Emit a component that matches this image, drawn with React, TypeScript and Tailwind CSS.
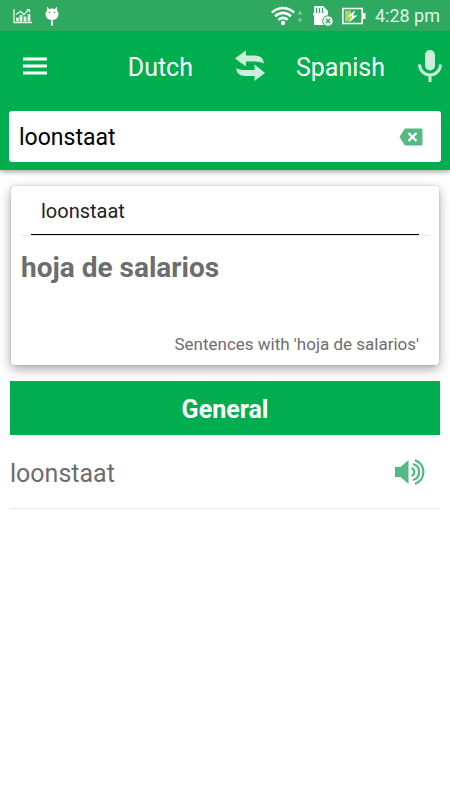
import { useState } from "react";

const StatusBar = () => {
    return (
        <div className="flex h-[31px] items-center justify-between bg-[#2fa860] pl-3 pr-[10px] text-[#d9f0e2]">
            <div className="flex items-center gap-3">
                <svg className="h-5 w-5" viewBox="0 0 20 20" fill="none" stroke="currentColor">
                    <path d="M2 3v13.500H20" strokeWidth="1.400" />
                    <path d="M5.500 15.500v-4M9 15.500V9M13 15.500v-5M17 15.500V8" strokeWidth="2.800" />
                    <path d="M4 8.500L8.500 5.500L12 8.500L17 3.500" strokeWidth="1.500" />
                    <path d="M14.500 3.500h3v3" strokeWidth="1.200" />
                </svg>
                <svg className="h-5 w-4" viewBox="0 0 16 20">
                    <path d="M3 .5L5 3Q8 1.800 11 3L13 .5L13 4.500Q14.500 6.500 14.500 8.500A6.500 5.500 0 0 1 1.500 8.500Q1.500 6.500 3 4.500Z" fill="#fff" />
                    <circle cx="5.500" cy="6.500" r=".8" fill="#2fa860" />
                    <circle cx="10.500" cy="6.500" r=".8" fill="#2fa860" />
                    <path d="M8 14.500v5" stroke="#fff" strokeWidth="2" />
                </svg>
            </div>
            <div className="flex items-center">
                <svg className="h-5 w-8" viewBox="0 0 32 20" fill="none">
                    <path d="M.8 6.500Q12 -2.500 23.200 6.500M4 10.300Q12 3.500 20 10.300M7.300 13.800Q12 10 16.700 13.800" stroke="#fff" strokeWidth="2.600" />
                    <circle cx="12" cy="17" r="2.200" fill="#fff" />
                    <path d="M26.500 8.500L29 4.500L31.500 8.500ZM26.500 12.500L29 16.500L31.500 12.500Z" fill="#83c99c" />
                </svg>
                <svg className="ml-2 h-5 w-6" viewBox="0 0 24 20">
                    <path d="M3 0H12L17 5V19H4Q3 19 3 18V10L2 8L3 6Z" fill="#fff" />
                    <path d="M5.500 2v5M8.500 2v5M11.500 2v5" stroke="#2fa860" strokeWidth="1.300" />
                    <circle cx="17" cy="15" r="5.300" fill="#e5f5eb" stroke="#2fa860" strokeWidth="1" />
                    <path d="M15 13l4 4M19 13l-4 4" stroke="#2fa860" strokeWidth="1.300" />
                </svg>
                <svg className="ml-[7px] h-5 w-6" viewBox="0 0 24 20">
                    <path d="M.8 2.500H20.200V17.500H.8Z" fill="none" stroke="#fff" strokeWidth="1.600" />
                    <path d="M21 7h2.500v6H21Z" fill="#fff" />
                    <path d="M3 4.500H9V15.500H3Z" fill="#a5d468" />
                    <path d="M9 4.500H18V15.500H9Z" fill="#2fa860" />
                    <path d="M13.500 4L5.500 10.500H10L7.500 16L15.500 9.500H11Z" fill="#fff" />
                </svg>
                <span className="ml-[9px] text-lg text-[#e3f4e9]">4:28 pm</span>
            </div>
        </div>
    );
};

const Toolbar = () => {
    return (
        <nav className="flex h-[70px] items-center pl-[23px] pr-2 text-[25px] text-white">
            <button type="button" aria-label="Menu" className="mr-auto">
                <svg className="h-[18px] w-6" viewBox="0 0 24 18">
                    <path d="M0 2h24M0 9h24M0 16h24" stroke="#fff" strokeWidth="3" />
                </svg>
            </button>
            <button type="button" className="pt-1">Dutch</button>
            <button type="button" aria-label="Swap languages" className="ml-[42px]">
                <svg className="h-8 w-[30px]" viewBox="0 0 30 32" fill="#ccefdc">
                    <path d="M0 8.500L11 .3V5.500H20Q28 5.500 29 13.500Q26 11.500 20 11.500H11V16.500Z" />
                    <path d="M30 23L19.500 31V26H10Q2 26 1 18Q4 20 10 20H19.500V14.500Z" />
                </svg>
            </button>
            <button type="button" className="ml-[31px] pt-1">Spanish</button>
            <button type="button" aria-label="Voice input" className="ml-[33px]">
                <svg className="h-8 w-6" viewBox="0 0 24 32" fill="none">
                    <rect x="7" y="0" width="10" height="20.500" rx="5" fill="#ccefdc" />
                    <path d="M1.500 14.500A10.500 10.500 0 0 0 22.500 14.500M12 25v7" stroke="#ccefdc" strokeWidth="3" />
                </svg>
            </button>
        </nav>
    );
};

const App = () => {
    const [query, setQuery] = useState("loonstaat");

    return (
        <div className="min-h-screen bg-white font-[Roboto,sans-serif]">
            <header className="bg-[#00ae50] shadow-[0_2px_5px_rgba(0,0,0,0.35)]">
                <StatusBar />
                <Toolbar />
                <form className="px-[9px] pb-2 pt-[10px]" onSubmit={(e) => e.preventDefault()}>
                    <div className="flex h-[51px] items-center rounded-[3px] bg-white pl-[10px] pr-[18px]">
                        <input
                            type="text"
                            aria-label="Search"
                            value={query}
                            onChange={(e) => setQuery(e.target.value)}
                            className="min-w-0 flex-1 pt-1 text-[23px] text-black outline-none"
                        />
                        <button type="button" aria-label="Clear" onClick={() => setQuery("")}>
                            <svg className="h-[18px] w-6" viewBox="0 0 24 18">
                                <path d="M7 .5H22Q23.500 .5 23.500 2V16Q23.500 17.500 22 17.500H7Q6 17.500 5.200 16.500L.5 9L5.200 1.500Q6 .5 7 .5Z" fill="#54b983" />
                                <path d="M9.500 5L17.500 13M17.500 5L9.500 13" stroke="#fff" strokeWidth="2.400" />
                            </svg>
                        </button>
                    </div>
                </form>
            </header>

            <main className="px-[10px] pt-4">
                <section className="mx-px flex h-[179px] flex-col rounded bg-white px-[10px] shadow-[0_4px_12px_rgba(0,0,0,0.35),0_0_3px_rgba(0,0,0,0.15)]">
                    <div className="border-b border-gray-200 px-[10px]">
                        <p className="h-[49px] border-b border-black px-[10px] pt-[10px] text-xl leading-[30px] text-[#222]">loonstaat</p>
                    </div>
                    <h1 className="mt-4 text-[28px] font-bold leading-8 text-[#6d6d6d]">hoja de salarios</h1>
                    <a href="#sentences" className="mb-[9px] mr-[10px] mt-auto self-end text-[17px] leading-6 text-[#6d6d6d]">
                        Sentences with 'hoja de salarios'
                    </a>
                </section>

                <h2 className="mt-4 flex h-[54px] items-center justify-center bg-[#00ae50] pt-1 text-[25px] font-bold text-white">General</h2>

                <div className="flex h-[74px] items-center justify-between border-b border-gray-200 pr-[14px]">
                    <span className="pt-1 text-[25px] text-[#6d6d6d]">loonstaat</span>
                    <button type="button" aria-label="Listen">
                        <svg className="h-[26px] w-8" viewBox="0 0 32 26" fill="none">
                            <path d="M1 8H6.500L14.500 1V25L6.500 18H1Z" fill="#54b983" />
                            <path d="M17.500 9A4.300 4.300 0 0 1 17.500 17M19 5A8.300 8.300 0 0 1 19 21M21 1.200A12.500 12.500 0 0 1 21 24.800" stroke="#54b983" strokeWidth="2.300" />
                        </svg>
                    </button>
                </div>
            </main>
        </div>
    );
};

export default App;
